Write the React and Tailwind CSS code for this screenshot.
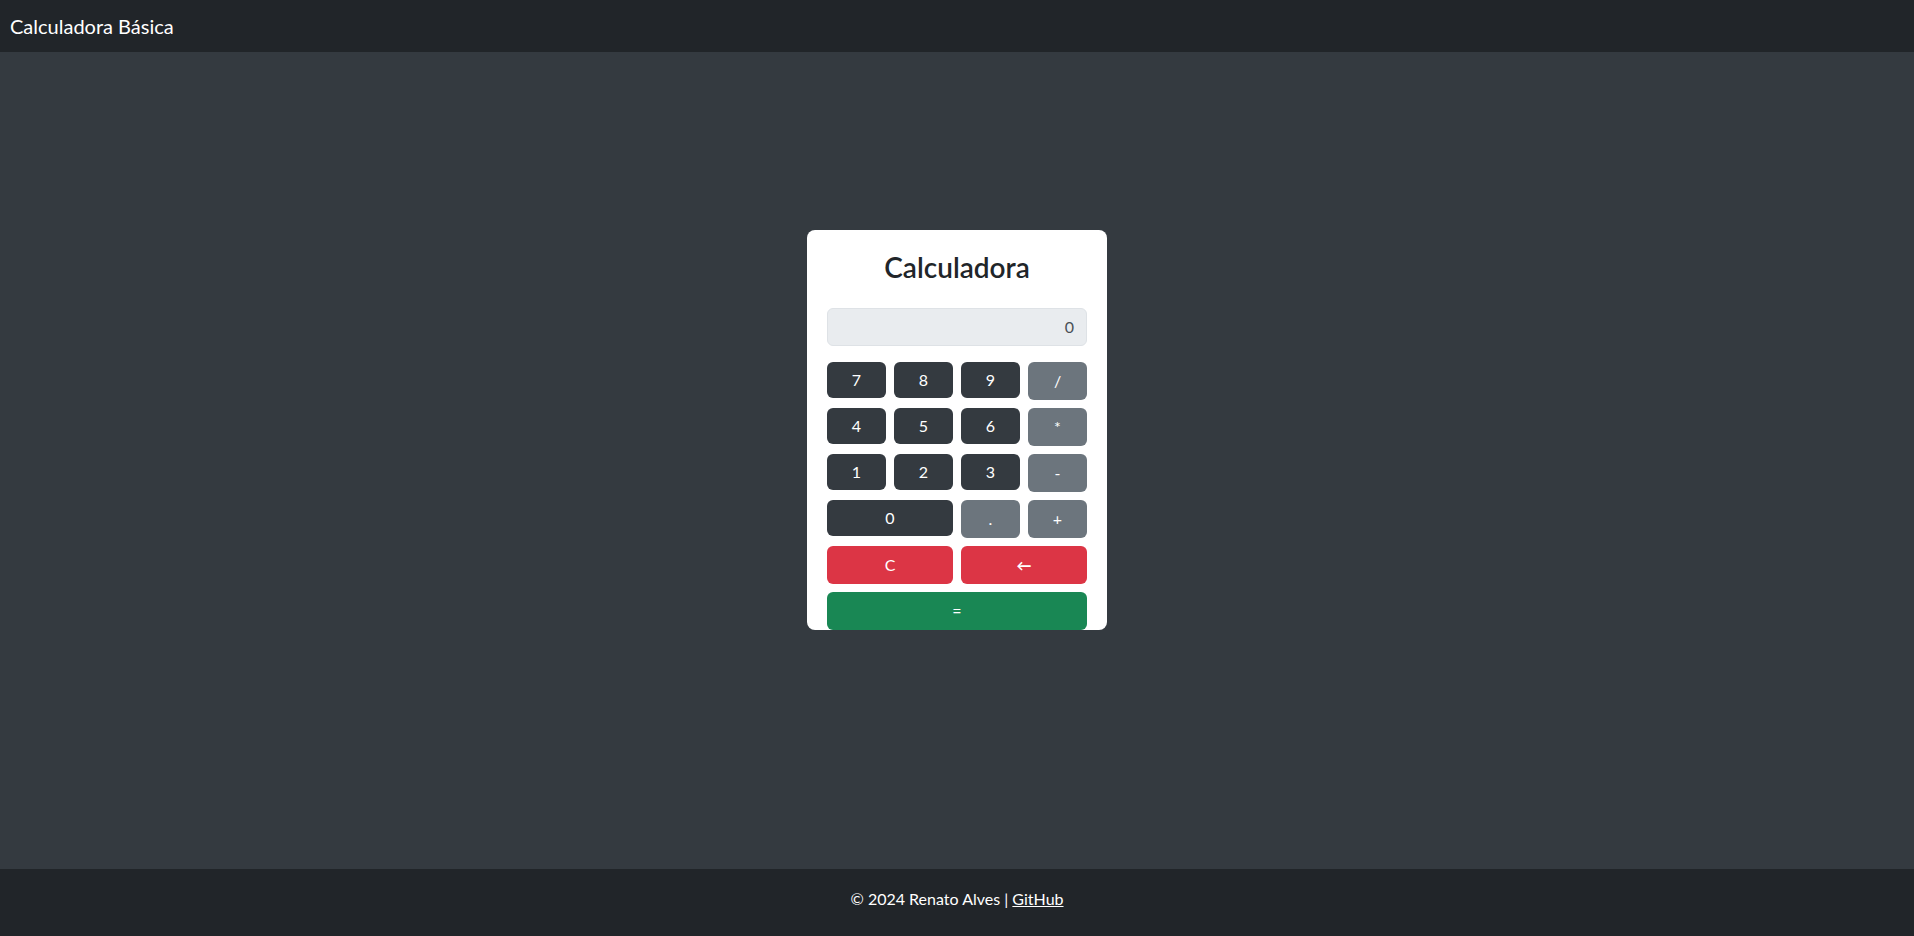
import React, { useState } from "react";

const keys = [
  { label: "7", kind: "num" },
  { label: "8", kind: "num" },
  { label: "9", kind: "num" },
  { label: "/", kind: "op" },
  { label: "4", kind: "num" },
  { label: "5", kind: "num" },
  { label: "6", kind: "num" },
  { label: "*", kind: "op" },
  { label: "1", kind: "num" },
  { label: "2", kind: "num" },
  { label: "3", kind: "num" },
  { label: "-", kind: "op" },
  { label: "0", kind: "num", wide: true },
  { label: ".", kind: "op" },
  { label: "+", kind: "op" },
];

const kindClass = {
  num: "h-[36px] bg-[#343a40]",
  op: "h-[38px] bg-[#6c757d]",
};

export default function App() {
  const [value, setValue] = useState("0");

  const press = (k) => {
    setValue((v) => (v === "0" && k !== "." ? k : v + k));
  };

  const calc = () => {
    try {
      // eslint-disable-next-line no-new-func
      const r = Function(`return (${value})`)();
      setValue(String(r));
    } catch {
      setValue("Erro");
    }
  };

  return (
    <div
      className="min-h-screen flex flex-col bg-[#343a40] text-white"
      style={{ fontFamily: 'Lato, "Noto Sans", sans-serif' }}
    >
      <header className="h-[52px] bg-[#212529] flex items-center pl-[10px]">
        <span className="text-[20px] leading-none">Calculadora Básica</span>
      </header>

      <main className="flex-1 flex items-center justify-center pb-[61px]">
        <div className="w-[300px] h-[400px] bg-white rounded-[8px] px-5 pt-5 overflow-hidden">
          <h1 className="text-[28px] leading-[34px] font-semibold text-center text-[#212529]">
            Calculadora
          </h1>
          <div className="mt-6 h-[38px] rounded-[6px] bg-[#e9ecef] border border-[#dee2e6] flex items-center justify-end px-3 text-[16px] text-[#495057]">
            {value}
          </div>
          <div className="mt-4 grid grid-cols-4 gap-x-2 gap-y-2 auto-rows-[38px]">
            {keys.map((k) => (
              <button
                key={k.label}
                onClick={() => press(k.label)}
                className={`${kindClass[k.kind]} ${
                  k.wide ? "col-span-2" : ""
                } self-start rounded-[6px] text-white text-[16px] flex items-center justify-center`}
              >
                {k.label}
              </button>
            ))}
            <button
              onClick={() => setValue("0")}
              className="col-span-2 h-[38px] rounded-[6px] bg-[#dc3545] text-white text-[16px]"
            >
              C
            </button>
            <button
              onClick={() => setValue((v) => (v.length > 1 ? v.slice(0, -1) : "0"))}
              className="col-span-2 h-[38px] rounded-[6px] bg-[#dc3545] text-white text-[15px] font-bold"
            >
              ←
            </button>
            <button
              onClick={calc}
              className="col-span-4 h-[38px] rounded-[6px] bg-[#198754] text-white text-[16px]"
            >
              =
            </button>
          </div>
        </div>
      </main>

      <footer className="h-[67px] bg-[#212529] flex items-center justify-center text-[16px] pb-[8px]">
        <span>
          © 2024 Renato Alves |{" "}
          <a href="#" className="underline text-white">
            GitHub
          </a>
        </span>
      </footer>
    </div>
  );
}
